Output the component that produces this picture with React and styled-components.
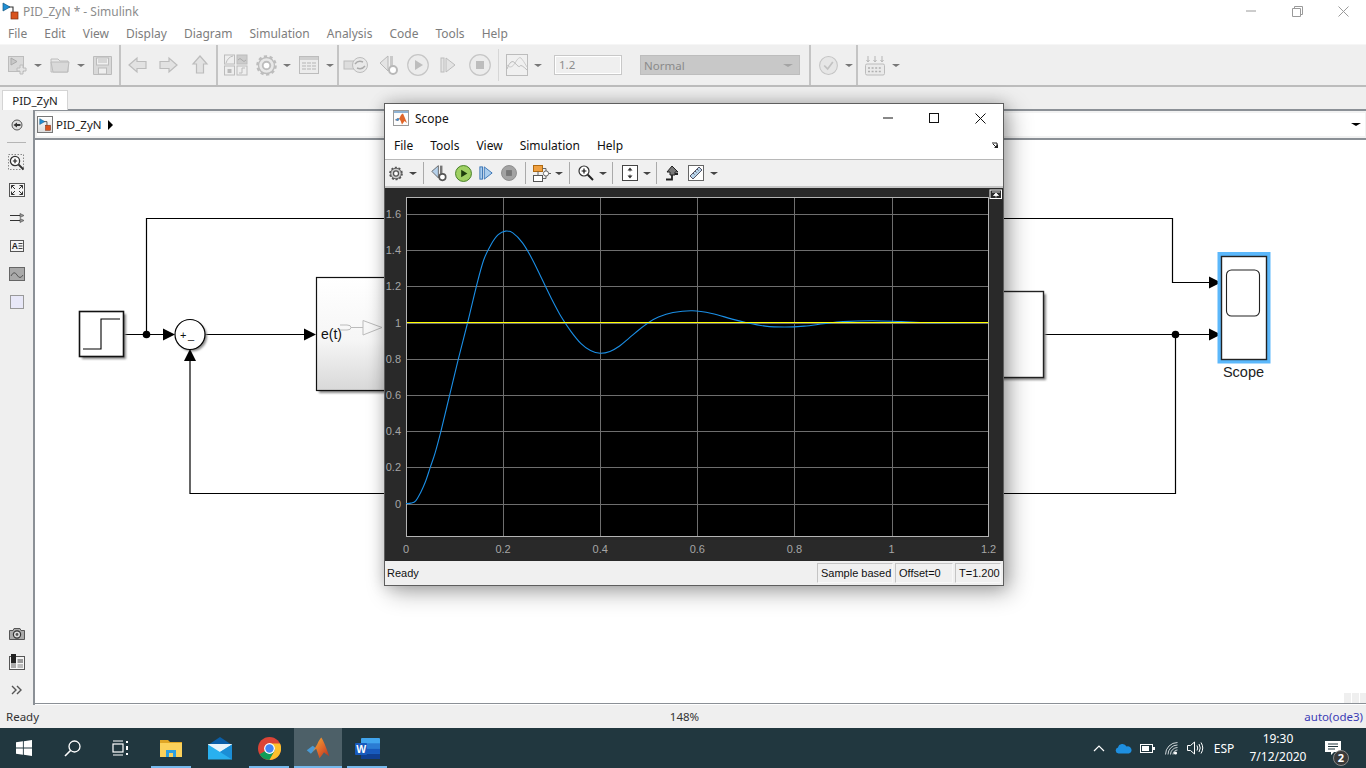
import React from 'react';
import styled, { createGlobalStyle } from 'styled-components';

const GlobalStyle = createGlobalStyle`
  html, body { margin: 0; padding: 0; background: #fff; }
  body { width: 1366px; height: 768px; overflow: hidden; font-family: "Noto Sans", "Open Sans", sans-serif; }
  * { box-sizing: border-box; }
`;

/* ---------- layout ---------- */
const Page = styled.div`
  position: relative;
  width: 1366px;
  height: 768px;
  display: flex;
  flex-direction: column;
`;
const TitleBar = styled.div`
  height: 22px;
  display: flex;
  align-items: center;
  padding-left: 2px;
  background: #fff;
`;
const TitleText = styled.span`
  margin-left: 3px;
  font-size: 12px;
  color: #8c8c8c;
`;
const WinButtons = styled.div`
  margin-left: auto;
  display: flex;
  align-items: center;
`;
const WinButton = styled.div`
  width: ${(p) => p.$w}px;
  display: flex;
  justify-content: center;
`;
const MenuBar = styled.div`
  height: ${(p) => p.$h}px;
  display: flex;
  align-items: center;
  gap: 17px;
  padding-left: ${(p) => p.$pad}px;
  background: #fff;
  position: relative;
`;
const MenuItem = styled.span`
  font-size: 12px;
  color: ${(p) => p.$color};
`;
const Toolbar = styled.div`
  height: 43px;
  display: flex;
  background: #efefef;
  border-top: 1px solid #f6f6f6;
  border-bottom: 2px solid #bcbcbc;
`;
const ToolGroup = styled.div`
  width: ${(p) => (p.$w ? `${p.$w}px` : 'auto')};
  flex: ${(p) => (p.$w ? 'none' : 1)};
  display: flex;
  align-items: center;
  padding-left: ${(p) => p.$pad || 0}px;
  border-right: 2px solid ${(p) => (p.$last ? 'transparent' : '#c4c4c4')};
`;
const Slot = styled.div`
  width: ${(p) => p.$w}px;
  margin-left: ${(p) => p.$ml || 0}px;
  flex: none;
  display: flex;
  align-items: center;
  justify-content: center;
`;
const ThinSep = styled.div`
  width: 1px;
  height: ${(p) => p.$h}px;
  margin: 0 ${(p) => p.$mr}px 0 ${(p) => p.$ml}px;
  background: ${(p) => p.$color};
  flex: none;
`;
const StopInput = styled.div`
  width: 68px;
  height: 20px;
  margin-left: 9px;
  border: 1px solid #c8c8c8;
  box-shadow: inset 0 0 0 1px #fff;
  padding-left: 4px;
  font-size: 11.5px;
  line-height: 18px;
  color: #8c8c8c;
`;
const ModeSelect = styled.div`
  width: 160px;
  height: 20px;
  margin-left: 18px;
  background: #c8c8c8;
  border: 1px solid #bdbdbd;
  padding: 0 6px 0 3px;
  display: flex;
  align-items: center;
  justify-content: space-between;
  font-size: 11.5px;
  color: #8a8a8a;
`;
const TabStrip = styled.div`
  height: 22px;
  background: #efefef;
  padding: 3px 0 0 2px;
  position: relative;
`;
const Tab = styled.div`
  width: 66px;
  height: 20px;
  background: #fff;
  border: 1px solid #d4d4d4;
  border-bottom: none;
  display: flex;
  align-items: center;
  justify-content: center;
  font-size: 11.5px;
  color: #1c1c1c;
  position: relative;
  z-index: 1;
`;
const Workspace = styled.div`
  height: 596px;
  display: flex;
`;
const Sidebar = styled.div`
  width: 35px;
  flex: none;
  background: #efefef;
  border-right: 2px solid #8b9096;
  display: flex;
  flex-direction: column;
  justify-content: space-between;
  padding: 2px 0 1px;
`;
const SideGroup = styled.div`
  display: flex;
  flex-direction: column;
  align-items: center;
`;
const SideItem = styled.div`
  width: 33px;
  height: 28px;
  display: flex;
  align-items: center;
  justify-content: center;
`;
const SideRule = styled.div`
  width: 19px;
  height: 1px;
  background: #b5b5b5;
  margin: 3px 0 5px;
`;
const Editor = styled.div`
  flex: 1;
  display: flex;
  flex-direction: column;
`;
const AddressBar = styled.div`
  height: 31px;
  border-top: 2px solid #8b9096;
  border-bottom: 2px solid #8b9096;
  background: #fff;
  box-shadow: inset 0 0 0 2px #f2f2f2;
  display: flex;
  align-items: center;
  padding: 0 6px 0 2px;
`;
const AddressIcon = styled.div`
  width: 16px;
  height: 17px;
  border: 1px solid #777;
  background: linear-gradient(#fff, #ddd);
  display: flex;
  align-items: center;
  justify-content: center;
`;
const AddressText = styled.span`
  margin-left: 3px;
  font-size: 11.5px;
  color: #1a1a1a;
`;
const Triangle = styled.span`
  width: 0;
  height: 0;
  margin-left: ${(p) => p.$ml || 0}px;
  border-top: ${(p) => p.$down ? `${p.$s * 0.75}px solid ${p.$color}` : `${p.$s}px solid transparent`};
  border-bottom: ${(p) => (p.$down ? 'none' : `${p.$s}px solid transparent`)};
  border-left: ${(p) => (p.$down ? `${p.$s}px solid transparent` : `${p.$s}px solid ${p.$color}`)};
  border-right: ${(p) => (p.$down ? `${p.$s}px solid transparent` : 'none')};
  flex: none;
`;
const Canvas = styled.div`
  height: 564px;
  background: #fff;
  border-bottom: 1px solid #8b9096;
  position: relative;
`;
const Grip = styled.div`
  position: absolute;
  right: 0;
  bottom: 0;
  display: flex;
  gap: 1px;
`;
const GripCell = styled.div`
  width: 7px;
  height: 10px;
  background: #efefef;
`;
const StatusBar = styled.div`
  height: 23px;
  background: #efefef;
  display: grid;
  grid-template-columns: 1fr 60px 1fr;
  align-items: center;
  padding: 0 3px 0 6px;
  font-size: 11.5px;
  color: #333;
`;
const StatusCell = styled.span`
  text-align: ${(p) => p.$align};
  color: ${(p) => p.$color || '#333'};
`;

/* ---------- scope window ---------- */
const ScopeWindow = styled.div`
  position: absolute;
  left: 384px;
  top: 103px;
  width: 620px;
  height: 483px;
  background: #fff;
  border: 1px solid #5e5e5e;
  box-shadow: 6px 6px 22px rgba(0, 0, 0, 0.32), 0 0 14px rgba(0, 0, 0, 0.18);
  display: flex;
  flex-direction: column;
  z-index: 5;
`;
const ScopeTitle = styled.div`
  height: 28px;
  display: flex;
  align-items: center;
  padding-left: 8px;
  font-size: 12px;
  color: #111;
`;
const ScopeName = styled.span`
  margin-left: 6px;
`;
const ScopeMenuArrow = styled.div`
  margin-left: auto;
  margin-right: 4px;
  display: flex;
`;
const ScopeTools = styled.div`
  height: 29px;
  display: flex;
  align-items: center;
  background: #f0f0f0;
  border-top: 1px solid #b8b8b8;
  border-bottom: 2px solid #c6c6c6;
`;
const ScopeStatus = styled.div`
  height: 24px;
  background: #f0f0f0;
  display: flex;
  align-items: center;
  padding: 0 2px;
  font-family: "Liberation Sans", Arial, sans-serif;
  font-size: 11px;
  color: #111;
`;
const StatusGap = styled.div`
  flex: 1;
`;
const SunkenCell = styled.div`
  width: ${(p) => p.$w}px;
  height: 20px;
  margin-left: 2px;
  border: 1px solid #c4c4c4;
  border-right-color: #f8f8f8;
  border-bottom-color: #f8f8f8;
  display: flex;
  align-items: center;
  padding-left: 3px;
  white-space: nowrap;
`;

/* ---------- taskbar ---------- */
const Taskbar = styled.div`
  height: 40px;
  background: #21373f;
  display: flex;
`;
const TaskSlot = styled.div`
  width: ${(p) => p.$w}px;
  margin-left: ${(p) => p.$ml || 0}px;
  position: relative;
  display: flex;
  align-items: center;
  justify-content: center;
  background: ${(p) => (p.$active ? '#4d6068' : 'transparent')};
  &::after {
    content: '';
    display: ${(p) => (p.$bar ? 'block' : 'none')};
    position: absolute;
    bottom: 0;
    left: ${(p) => (p.$active ? 0 : 4)}px;
    right: ${(p) => (p.$active ? 0 : 4)}px;
    height: 2px;
    background: #76b9ed;
  }
`;
const Tray = styled.div`
  margin-left: auto;
  display: flex;
  align-items: center;
  padding-right: 15px;
  color: #fff;
  font-size: 12px;
`;
const TraySlot = styled.div`
  width: ${(p) => p.$w}px;
  position: relative;
  display: flex;
  align-items: center;
  justify-content: center;
`;
const Clock = styled.div`
  line-height: 18px;
  text-align: center;
`;
const Badge = styled.span`
  position: absolute;
  left: 18px;
  top: 9px;
  width: 16px;
  height: 16px;
  border-radius: 50%;
  background: #3a3a3a;
  border: 1px solid #8a8a8a;
  font-size: 11px;
  font-weight: 700;
  line-height: 14px;
  text-align: center;
`;

/* ---------- icons ---------- */
const G1 = '#bcbcbc';
const G2 = '#d9d9d9';
const Svg = ({ w = 20, h = 20, children }) => (
  <svg width={w} height={h} viewBox={`0 0 ${w} ${h}`} style={{ display: 'block' }}>
    {children}
  </svg>
);
const Caret = ({ color = '#777' }) => <Triangle $down $s={4} $color={color} />;

const ModelMark = ({ size = 16 }) => (
  <svg width={size} height={size} viewBox="0 0 18 18" style={{ display: 'block' }}>
    <path d="M4 5H11V12" fill="none" stroke="#333" strokeWidth="1.1" />
    <path d="M1 1L1 9L8 5z" fill="#1f8fd6" stroke="#16577f" strokeWidth=".7" />
    <rect x="9" y="10" width="7" height="7" fill="#d9531e" stroke="#7a2c10" strokeWidth=".7" />
  </svg>
);
const MatlabLogo = ({ size = 16 }) => (
  <svg width={size} height={size} viewBox="0 0 32 32" style={{ display: 'block' }}>
    <defs>
      <linearGradient id="mlpeak" x1="0" y1="0" x2="1" y2="1">
        <stop offset="0" stopColor="#f2b035" />
        <stop offset=".55" stopColor="#e0662a" />
        <stop offset="1" stopColor="#b52f1e" />
      </linearGradient>
    </defs>
    <path d="M1 19L9 13L13.5 16.5L9 21L6.5 23.5z" fill="#4a9ad4" />
    <path d="M9 21L15 11Q18 4 20.5 2Q24 7 31 27Q27 24.5 24 21.5Q21 26 18 29.5Q15.5 22 13.5 16.5z" fill="url(#mlpeak)" />
  </svg>
);
const MatlabFrame = () => (
  <svg width="16" height="16" viewBox="0 0 16 16" style={{ display: 'block' }}>
    <rect x=".5" y=".5" width="15" height="15" fill="#fdfdfd" stroke="#9a9a9a" />
    <rect x="1" y="1" width="14" height="2" fill="#8fb3d4" />
    <path d="M2 10L5 8L6.5 9L5 11zM5 11L8 5Q9 3.5 10 3.5Q12 8 14 13Q12.5 12 11.5 11Q10 13 9 14.5Q8 11 6.5 9z" fill="#e0662a" />
    <path d="M2 10L5 8L6.5 9L5 11z" fill="#3f8fcf" />
  </svg>
);
const NewModelIcon = () => (
  <Svg w={20} h={20}>
    <rect x="1.5" y="1.5" width="15" height="15" fill={G2} stroke={G1} />
    <path d="M4 3L4 10L10 6.5z" fill="#c8c8c8" stroke="#aaa" />
    <path d="M13 10H16V13H19V16H16V19H13V16H10V13H13z" fill="#e4e4e4" stroke={G1} />
  </Svg>
);
const FolderIcon = () => (
  <Svg w={20} h={18}>
    <path d="M1 3H8L10 5H18V16H1z" fill="#e8e8e8" stroke={G1} />
    <path d="M1 6H19L17.5 16H3z" fill={G2} stroke={G1} />
  </Svg>
);
const SaveIcon = () => (
  <Svg w={19} h={19}>
    <path d="M.5.5H18.5V18.5H.5z" fill={G2} stroke={G1} />
    <rect x="3.5" y="2" width="12" height="7" fill="#f0f0f0" stroke={G1} />
    <path d="M5 4H14M5 6H14" stroke={G1} />
    <rect x="5.5" y="12" width="8" height="6" fill="#efefef" stroke={G1} />
  </Svg>
);
const ArrowIcon = ({ rotate = 0 }) => (
  <Svg w={20} h={20}>
    <path transform={`rotate(${rotate} 10 10)`} d="M1 10L9 3V6.5H18V13.5H9V17z" fill="#e2e2e2" stroke={G1} strokeWidth="1.2" />
  </Svg>
);
const LibraryIcon = () => (
  <Svg w={24} h={22}>
    <rect x=".5" y="1" width="10" height="9" fill="#eee" stroke={G1} />
    <path d="M2 9Q4 3 9 2" fill="none" stroke={G1} />
    <rect x="13" y="1" width="10" height="9" fill="#ccc" stroke={G1} />
    <path d="M14 6Q16 3 18 6T22 6" fill="none" stroke="#aaa" />
    <rect x=".5" y="12" width="10" height="9" fill="#eee" stroke={G1} />
    <rect x="3.5" y="15" width="4" height="4" fill="#bbb" />
    <rect x="13" y="12" width="10" height="9" fill="#eee" stroke={G1} />
    <path d="M15 19H18V14H21" fill="none" stroke={G1} />
  </Svg>
);
const GearIcon = ({ size = 20, color = '#bdbdbd', inner = '#e8e8e8' }) => (
  <svg width={size} height={size} viewBox="0 0 20 20" style={{ display: 'block' }}>
    <circle cx="10" cy="10" r="7.6" fill={inner} stroke={color} strokeWidth="1.3" />
    <circle cx="10" cy="10" r="8.6" fill="none" stroke={color} strokeWidth="2.4" strokeDasharray="3 2.4" />
    <circle cx="10" cy="10" r="3.6" fill="#fff" stroke={color} strokeWidth="1.8" />
  </svg>
);
const GridIcon = () => (
  <Svg w={20} h={18}>
    <rect x=".5" y=".5" width="19" height="17" fill="#ececec" stroke={G1} />
    <rect x="1" y="1" width="18" height="3" fill="#cfcfcf" />
    <path d="M3 7H17M3 10H17M3 13H17" stroke="#b5b5b5" strokeDasharray="4 1" />
  </Svg>
);
const LoopIcon = () => (
  <Svg w={26} h={20}>
    <rect x="1" y="6" width="10" height="8" fill="#ddd" stroke={G1} />
    <circle cx="17" cy="10" r="7.5" fill="#e8e8e8" stroke={G1} />
    <path d="M12 9Q15 5 20 7M22 11Q19 15 14 13" fill="none" stroke="#aaa" strokeWidth="1.4" />
  </Svg>
);
const StepBackIcon = ({ color = '#c9c9c9', stroke = '#b8b8b8', fill = '#e4e4e4' }) => (
  <Svg w={22} h={22}>
    <path d="M1 9L9 2V17z" fill={fill} stroke={stroke} />
    <rect x="11" y="2" width="3" height="10" fill={color} />
    <circle cx="14" cy="16" r="4" fill="#fff" stroke={stroke} strokeWidth="2" />
  </Svg>
);
const RoundBtn = ({ size = 22, ring = '#c6c6c6', bg = '#ececec', children }) => (
  <svg width={size} height={size} viewBox="0 0 22 22" style={{ display: 'block' }}>
    <circle cx="11" cy="11" r="10.3" fill={bg} stroke={ring} strokeWidth="1.2" />
    {children}
  </svg>
);
const StepFwdIcon = ({ stroke = '#bcbcbc', fill = '#e4e4e4', size = 16 }) => (
  <svg width={size} height={size} viewBox="0 0 16 16" style={{ display: 'block' }}>
    <rect x="1" y="1" width="3" height="14" fill={fill} stroke={stroke} />
    <path d="M6 1L15 8L6 15z" fill={fill} stroke={stroke} />
  </svg>
);
const ScopeIcon = () => (
  <Svg w={22} h={22}>
    <rect x=".5" y=".5" width="21" height="21" fill="#f0f0f0" stroke={G1} />
    <path d="M1 15Q5 4 9 9T14 12T21 16" fill="none" stroke={G1} />
    <path d="M1 11Q5 16 9 9T15 4T21 13" fill="none" stroke="#ccc" />
  </Svg>
);
const CheckIcon = () => (
  <RoundBtn size={19} bg="#e6e6e6" ring="#c4c4c4">
    <path d="M6 11L10 15L16 7" fill="none" stroke="#c2c2c2" strokeWidth="2" />
  </RoundBtn>
);
const KeyboardIcon = () => (
  <Svg w={20} h={21}>
    <path d="M3 1V6M10 1V6M17 1V6" stroke="#b5b5b5" />
    <path d="M1.5 5L3 7L4.5 5M8.5 5L10 7L11.5 5M15.5 5L17 7L18.5 5" fill="none" stroke="#b5b5b5" />
    <rect x=".5" y="9" width="19" height="11" rx="1.5" fill="#eaeaea" stroke={G1} />
    <path d="M3 13H17M3 16.5H17" stroke="#b0b0b0" strokeWidth="1.6" strokeDasharray="2 1.6" />
  </Svg>
);

/* sidebar icons */
const BackCircle = () => (
  <Svg w={12} h={12}>
    <circle cx="6" cy="6" r="5" fill="#e0e0e0" stroke="#555" />
    <path d="M2.5 6L6 3.5V8.5zM6 5H9.5V7H6z" fill="#333" />
  </Svg>
);
const ZoomDashIcon = () => (
  <Svg w={17} h={17}>
    <rect x=".5" y=".5" width="15" height="15" fill="none" stroke="#888" strokeDasharray="1.5 1.5" />
    <circle cx="7" cy="7" r="4.6" fill="#fff" stroke="#333" strokeWidth="1.3" />
    <path d="M4.8 7H9.2M7 4.8V9.2" stroke="#222" strokeWidth="1.2" />
    <path d="M10.5 10.5L15.5 15.5" stroke="#333" strokeWidth="1.8" />
  </Svg>
);
const FitIcon = () => (
  <Svg w={16} h={14}>
    <rect x=".5" y=".5" width="15" height="13" fill="#f4f4f4" stroke="#555" />
    <path d="M2.5 2.5H5.5M2.5 2.5V5.5M2.5 2.5L6 6M13.5 2.5H10.5M13.5 2.5V5.5M13.5 2.5L10 6M2.5 11.5H5.5M2.5 11.5V8.5M2.5 11.5L6 8M13.5 11.5H10.5M13.5 11.5V8.5M13.5 11.5L10 8" fill="none" stroke="#333" />
  </Svg>
);
const RoutesIcon = () => (
  <Svg w={16} h={10}>
    <path d="M1 2.5H12M1 7.5H12" stroke="#333" />
    <path d="M11 .5L15 2.5L11 4.5zM11 5.5L15 7.5L11 9.5z" fill="#999" stroke="#444" strokeWidth=".6" />
  </Svg>
);
const AnnotationIcon = () => (
  <Svg w={14} h={12}>
    <rect x=".5" y=".5" width="13" height="11" fill="#f4f4f4" stroke="#555" />
    <text x="1.8" y="9" fontFamily="Liberation Sans, sans-serif" fontSize="8.5" fontWeight="700" fill="#222">A</text>
    <path d="M8.5 3.5H12.5M8.5 6H12.5M8.5 8.5H12.5" stroke="#444" />
  </Svg>
);
const ImageIcon = () => (
  <Svg w={16} h={14}>
    <rect x=".5" y=".5" width="15" height="13" fill="#a9a9a9" stroke="#666" />
    <path d="M2 9Q5 3 8 8T14 8" fill="none" stroke="#555" />
  </Svg>
);
const AreaIcon = () => (
  <Svg w={14} h={14}>
    <rect x=".5" y=".5" width="13" height="13" fill="#e8e8f8" stroke="#999" />
  </Svg>
);
const CameraIcon = () => (
  <Svg w={16} h={12}>
    <path d="M.5 2.5H4L5 .5H11L12 2.5H15.5V11.5H.5z" fill="#aaa" stroke="#555" />
    <circle cx="8" cy="6.5" r="3.6" fill="#ddd" stroke="#333" strokeWidth="1.2" />
    <circle cx="8" cy="6.5" r="1.4" fill="#555" />
  </Svg>
);
const ExplorerBarIcon = () => (
  <Svg w={16} h={16}>
    <rect x=".5" y="2.5" width="15" height="13" fill="#f4f4f4" stroke="#555" />
    <rect x="2" y="0" width="5" height="9" fill="#222" />
    <rect x="2" y="9" width="5" height="5" fill="#aaa" />
    <rect x="8.5" y="5" width="5.5" height="4" fill="#999" />
    <rect x="8.5" y="10" width="5.5" height="4" fill="#bbb" />
  </Svg>
);
const DoubleChevron = () => (
  <Svg w={11} h={10}>
    <path d="M1 1L5 5L1 9M6 1L10 5L6 9" fill="none" stroke="#555" strokeWidth="1.4" />
  </Svg>
);

/* scope toolbar icons */
const LayoutIcon = () => (
  <Svg w={18} h={17}>
    <rect x=".5" y=".5" width="9" height="6" fill="#f0a040" stroke="#b06a10" />
    <rect x=".5" y="10.5" width="9" height="6" fill="#fff" stroke="#555" />
    <circle cx="13" cy="8.5" r="2.6" fill="#fff" stroke="#666" />
    <path d="M9.5 3.5H13V6M9.5 13.5H13V11M15.5 8.5H18M5 6.5V10.5" fill="none" stroke="#666" />
  </Svg>
);
const MagnifyIcon = () => (
  <Svg w={16} h={16}>
    <circle cx="6" cy="6" r="5" fill="#fff" stroke="#333" strokeWidth="1.2" />
    <path d="M3.6 6H8.4M6 3.6V8.4" stroke="#111" strokeWidth="1.2" />
    <path d="M9.8 9.8L15 15" stroke="#222" strokeWidth="2" />
  </Svg>
);
const AutoscaleIcon = () => (
  <Svg w={16} h={16}>
    <rect x=".5" y=".5" width="15" height="15" fill="#fff" stroke="#444" />
    <path d="M8 2.5L5.5 5.5H10.5zM8 13.5L5.5 10.5H10.5z" fill="#333" />
    <path d="M8 5V6.5M8 9.5V11" stroke="#555" />
  </Svg>
);
const HighlightIcon = () => (
  <Svg w={15} h={16}>
    <path d="M1 14.5H7V9H13" fill="none" stroke="#222" strokeWidth="1.8" />
    <path d="M7 1L13 7H10V10H5V7H2z" fill="#777" stroke="#222" />
  </Svg>
);
const RulerIcon = () => (
  <Svg w={16} h={16}>
    <rect x=".5" y=".5" width="15" height="15" fill="#fff" stroke="#666" />
    <path d="M2 11L11 2L14 5L5 14z" fill="#b7d3ea" stroke="#556" />
    <path d="M5 8L6.5 9.5M7 6L8.5 7.5M9 4L10.5 5.5" stroke="#556" />
  </Svg>
);

/* taskbar icons */
const WindowsIcon = () => (
  <Svg w={16} h={16}>
    <path d="M0 2.3L6.9 1.3V7.6H0zM7.8 1.2L16 0V7.6H7.8zM0 8.4H6.9V14.7L0 13.7zM7.8 8.4H16V16L7.8 14.8z" fill="#fff" />
  </Svg>
);
const SearchIcon = () => (
  <Svg w={17} h={17}>
    <circle cx="10.5" cy="6.5" r="5.5" fill="none" stroke="#fff" strokeWidth="1.3" />
    <path d="M6.5 10.5L1 16" stroke="#fff" strokeWidth="1.6" />
  </Svg>
);
const TaskViewIcon = () => (
  <Svg w={17} h={16}>
    <rect x="1" y="4" width="10" height="8" fill="none" stroke="#fff" strokeWidth="1.2" />
    <path d="M1 1H11M1 15H11" stroke="#fff" strokeWidth="1.2" />
    <path d="M15 1V3M15 6V10M15 13V15" stroke="#fff" strokeWidth="2" />
  </Svg>
);
const ExplorerIcon = () => (
  <Svg w={22} h={19}>
    <path d="M0 1H8L10 3H22V6H0z" fill="#e0a626" />
    <path d="M0 4H22V18H0z" fill="#fbd15b" />
    <path d="M6 18V11H16V18H13V14H9V18z" fill="#2d9fe0" />
  </Svg>
);
const MailIcon = () => (
  <Svg w={24} h={23}>
    <path d="M0 8L12 0L24 8V9H0z" fill="#0a5ea8" />
    <path d="M0 7.5H24V22.5H0z" fill="#29b0ef" />
    <path d="M0 7.5L12 15L24 7.5V7H0z" fill="#e8f4fb" />
    <path d="M12 15L24 7.5V22.5z" fill="#1b8ed6" />
  </Svg>
);
const ChromeIcon = () => (
  <Svg w={23} h={23}>
    <circle cx="11.5" cy="11.5" r="11.5" fill="#db4437" />
    <path d="M11.5 11.5L1.6 17.3A11.5 11.5 0 0 0 11.5 23L17.2 13z" fill="#0f9d58" />
    <path d="M11.5 6.5H22A11.5 11.5 0 0 1 11.5 23L17 13z" fill="#fbc02d" />
    <circle cx="11.5" cy="11.5" r="5.4" fill="#fff" />
    <circle cx="11.5" cy="11.5" r="4.2" fill="#4285f4" />
  </Svg>
);
const WordIcon = () => (
  <Svg w={25} h={21}>
    <rect x="6" y="0" width="19" height="21" rx="1" fill="#41a5ee" />
    <rect x="6" y="5.3" width="19" height="5.3" fill="#2b7cd3" />
    <rect x="6" y="10.6" width="19" height="5.3" fill="#185abd" />
    <rect x="6" y="15.9" width="19" height="5.1" fill="#103f91" />
    <rect x="0" y="5" width="12" height="12" rx="1" fill="#185abd" />
    <text x="1.2" y="15" fontFamily="Liberation Sans, sans-serif" fontSize="10.5" fontWeight="700" fill="#fff">W</text>
  </Svg>
);
const TrayCaret = () => (
  <Svg w={12} h={7}>
    <path d="M1 6L6 1L11 6" fill="none" stroke="#fff" strokeWidth="1.2" />
  </Svg>
);
const CloudIcon = () => (
  <Svg w={17} h={11}>
    <path d="M3.5 10.5A3 3 0 0 1 3 4.6A4.5 4.5 0 0 1 11.5 3.5A3.6 3.6 0 0 1 14 10.5z" fill="#1e8fe0" />
  </Svg>
);
const BatteryIcon = () => (
  <Svg w={15} h={9}>
    <rect x=".5" y=".5" width="12" height="8" fill="none" stroke="#fff" />
    <rect x="2" y="2" width="7" height="5" fill="#fff" />
    <rect x="13" y="3" width="2" height="3" fill="#fff" />
  </Svg>
);
const WifiIcon = () => (
  <Svg w={13} h={13}>
    <path d="M.5 12.5A12 12 0 0 1 12.5 .5M3 12.5A9.5 9.5 0 0 1 12.5 3M5.5 12.5A7 7 0 0 1 12.5 5.5M8 12.5A4.5 4.5 0 0 1 12.5 8" fill="none" stroke="#cfd6d9" />
    <circle cx="10.5" cy="11" r="1.6" fill="#fff" />
  </Svg>
);
const SoundIcon = () => (
  <Svg w={17} h={14}>
    <path d="M.5 4.5H3.5L7.5 1V13L3.5 9.5H.5z" fill="none" stroke="#fff" />
    <path d="M10 4.5Q11.5 7 10 9.5M12 3Q14.5 7 12 11M14 1.5Q17.5 7 14 12.5" fill="none" stroke="#fff" />
  </Svg>
);
const NotifyIcon = () => (
  <Svg w={16} h={14}>
    <path d="M0 0H16V11H9L6 14V11H0z" fill="#fff" />
    <path d="M3 3H13M3 5.5H13M3 8H10" stroke="#21373f" />
  </Svg>
);

/* ---------- block diagram ---------- */
const ArrowRight = ({ x, y }) => <path d={`M${x} ${y}L${x - 12} ${y - 6}V${y + 6}z`} fill="#000" />;

const BlockDiagram = () => (
  <svg width="1331" height="563" viewBox="35 140 1331 563" style={{ display: 'block' }}>
    <defs>
      <linearGradient id="pidFill" x1="0" y1="0" x2="0" y2="1">
        <stop offset="0" stopColor="#fff" />
        <stop offset=".55" stopColor="#f6f6f6" />
        <stop offset="1" stopColor="#d8d8d8" />
      </linearGradient>
      <filter id="soft" x="-20%" y="-20%" width="140%" height="140%">
        <feGaussianBlur stdDeviation="1.2" />
      </filter>
    </defs>
    <g fill="none" stroke="#000" strokeWidth="1.2">
      <path d="M123 334.5H163M146.5 334.5V218.5H390M205 334.5H304" />
      <path d="M190 361V493.5H1175.5V334.5" />
      <path d="M1000 218.5H1172.5V282.5H1209M1043 334.5H1209" />
    </g>

    <rect x="82" y="314" width="44" height="45" fill="#888" filter="url(#soft)" />
    <rect x="79.5" y="311.5" width="44" height="45" fill="#fff" stroke="#111" strokeWidth="1.6" />
    <path d="M83 349H101V319H120" fill="none" stroke="#000" strokeWidth="1.1" />

    <circle cx="146.5" cy="334.5" r="3.8" fill="#000" />
    <ArrowRight x={175} y={334.5} />
    <circle cx="192" cy="336.5" r="15" fill="#888" filter="url(#soft)" />
    <circle cx="190" cy="334.5" r="15" fill="#fff" stroke="#000" strokeWidth="1.2" />
    <text x="180" y="339" fontFamily="Liberation Sans, sans-serif" fontSize="11" fill="#111">+</text>
    <text x="188" y="339" fontFamily="Liberation Sans, sans-serif" fontSize="11" fill="#111">_</text>
    <path d="M190 349L184 361H196z" fill="#000" />
    <ArrowRight x={316} y={334.5} />

    <rect x="319" y="280" width="70" height="113" fill="#888" filter="url(#soft)" />
    <rect x="316.5" y="277.5" width="72" height="113" fill="url(#pidFill)" stroke="#111" strokeWidth="1.2" />
    <text x="321" y="339" fontFamily="Liberation Sans, sans-serif" fontSize="14" fill="#111">e(t)</text>
    <path d="M340 325H347Q351 325 351 327.5Q351 330 347 330H340" fill="none" stroke="#bbb" />
    <path d="M351 327.5H363M363 320.5L382 327.5L363 335z" fill="none" stroke="#bbb" />

    <rect x="995" y="294" width="51" height="86" fill="#888" filter="url(#soft)" />
    <rect x="995" y="291.5" width="48.5" height="86" fill="#fff" stroke="#222" strokeWidth="1.4" />

    <circle cx="1175.5" cy="334.5" r="3.8" fill="#000" />
    <ArrowRight x={1221} y={282.5} />
    <ArrowRight x={1221} y={334.5} />

    <rect x="1217.5" y="252" width="53" height="111.5" fill="#5cb8fb" />
    <rect x="1221.5" y="256.5" width="45" height="103" fill="#fff" stroke="#222" strokeWidth="1.4" />
    <rect x="1226.5" y="270" width="33" height="46" rx="5" fill="#fff" stroke="#222" strokeWidth="1.1" />
    <text x="1243.5" y="377" textAnchor="middle" fontFamily="Liberation Sans, sans-serif" fontSize="14.5" fill="#222">Scope</text>
  </svg>
);

/* ---------- scope chart ---------- */
const CURVE = [
  [0, 0], [0.01, 0.002], [0.02, 0.015], [0.03, 0.06], [0.04, 0.12], [0.05, 0.2], [0.06, 0.28], [0.072, 0.4],
  [0.09, 0.6], [0.108, 0.8], [0.127, 1], [0.145, 1.2], [0.16, 1.345], [0.175, 1.43], [0.19, 1.485], [0.205, 1.505],
  [0.22, 1.495], [0.24, 1.44], [0.26, 1.35], [0.28, 1.24], [0.3, 1.13], [0.32, 1.03], [0.34, 0.95], [0.36, 0.885],
  [0.38, 0.845], [0.4, 0.83], [0.42, 0.84], [0.44, 0.87], [0.46, 0.915], [0.48, 0.96], [0.5, 1], [0.52, 1.03],
  [0.55, 1.055], [0.59, 1.065], [0.63, 1.05], [0.67, 1.02], [0.7, 1], [0.74, 0.98], [0.78, 0.975], [0.82, 0.98],
  [0.86, 0.993], [0.9, 1.005], [0.96, 1.01], [1.02, 1.005], [1.08, 0.999], [1.2, 1],
];
const px = (t) => 406 + t * 485.5;
const py = (v) => 503.5 - v * 181;

// catmull-rom through the sampled points
const curvePath = () => {
  const pts = CURVE.map(([t, v]) => [px(t), py(v)]);
  let d = `M${pts[0][0]} ${pts[0][1]}`;
  for (let i = 0; i < pts.length - 1; i++) {
    const a = pts[Math.max(i - 1, 0)];
    const b = pts[i];
    const c = pts[i + 1];
    const e = pts[Math.min(i + 2, pts.length - 1)];
    d += `C${b[0] + (c[0] - a[0]) / 6} ${b[1] + (c[1] - a[1]) / 6} ${c[0] - (e[0] - b[0]) / 6} ${c[1] - (e[1] - b[1]) / 6} ${c[0]} ${c[1]}`;
  }
  return d;
};

const XTICKS = [0, 0.2, 0.4, 0.6, 0.8, 1, 1.2];
const YTICKS = [0, 0.2, 0.4, 0.6, 0.8, 1, 1.2, 1.4, 1.6];

const ScopeChart = () => (
  <svg width="618" height="373" viewBox="385 188 618 373" style={{ display: 'block' }}>
    <rect x="385" y="188" width="618" height="373" fill="#292929" />
    <rect x="406.5" y="197.5" width="582" height="339" fill="#000" stroke="#b4b4b4" />
    {XTICKS.slice(1, -1).map((t) => (
      <path key={t} d={`M${Math.round(px(t)) + 0.5} 198V536`} stroke="#6e6e6e" />
    ))}
    {YTICKS.map((v) => (
      <path key={v} d={`M407 ${Math.round(py(v)) + 0.5}H988`} stroke="#6e6e6e" />
    ))}
    <path d={curvePath()} fill="none" stroke="#1b8fe6" strokeWidth="1.1" />
    <path d="M407 322.5H988.5" stroke="#ffff00" strokeWidth="1.1" />
    {XTICKS.map((t) => (
      <text key={t} x={px(t)} y="553" textAnchor="middle" fontFamily="Liberation Sans, sans-serif" fontSize="11" fill="#a6a6a6">{t}</text>
    ))}
    {YTICKS.map((v) => (
      <text key={v} x="401" y={py(v) + 4} textAnchor="end" fontFamily="Liberation Sans, sans-serif" fontSize="11" fill="#a6a6a6">{v}</text>
    ))}
    <rect x="990" y="190" width="11.5" height="8.5" fill="#292929" stroke="#fff" />
    <path d="M992 192H1000M996 193L993.5 195.5H998.5zM996 195V197.5" stroke="#fff" fill="#fff" strokeWidth=".8" />
  </svg>
);

const GRAY_TEXT = '#7d7d7d';
const MENU = ['File', 'Edit', 'View', 'Display', 'Diagram', 'Simulation', 'Analysis', 'Code', 'Tools', 'Help'];
const SCOPE_MENU = ['File', 'Tools', 'View', 'Simulation', 'Help'];

export default function App() {
  return (
    <>
      <GlobalStyle />
      <Page>
        <TitleBar>
          <ModelMark size={18} />
          <TitleText>PID_ZyN * - Simulink</TitleText>
          <WinButtons>
            <WinButton $w={46}>
              <Svg w={10} h={10}><path d="M0 5H10" stroke="#9a9a9a" /></Svg>
            </WinButton>
            <WinButton $w={46}>
              <Svg w={11} h={11}><path d="M.5 2.5H8.5V10.5H.5zM2.5 2.5V.5H10.5V8.5H8.5" fill="none" stroke="#9a9a9a" /></Svg>
            </WinButton>
            <WinButton $w={46}>
              <Svg w={11} h={11}><path d="M.5 .5L10.5 10.5M10.5 .5L.5 10.5" stroke="#9a9a9a" /></Svg>
            </WinButton>
          </WinButtons>
        </TitleBar>
        <MenuBar $h={22} $pad={8}>
          {MENU.map((m) => <MenuItem key={m} $color={GRAY_TEXT}>{m}</MenuItem>)}
        </MenuBar>

        <Toolbar>
          <ToolGroup $w={121} $pad={6}>
            <Slot $w={21}><NewModelIcon /></Slot>
            <Slot $w={22}><Caret /></Slot>
            <Slot $w={22}><FolderIcon /></Slot>
            <Slot $w={20}><Caret /></Slot>
            <Slot $w={22}><SaveIcon /></Slot>
          </ToolGroup>
          <ToolGroup $w={97} $pad={2}>
            <Slot $w={30}><ArrowIcon /></Slot>
            <Slot $w={30}><ArrowIcon rotate={180} /></Slot>
            <Slot $w={30} $ml={2}><ArrowIcon rotate={90} /></Slot>
          </ToolGroup>
          <ToolGroup $w={121} $pad={4}>
            <Slot $w={28}><LibraryIcon /></Slot>
            <Slot $w={28} $ml={2}><GearIcon size={21} /></Slot>
            <Slot $w={14}><Caret /></Slot>
            <Slot $w={28} $ml={1}><GridIcon /></Slot>
            <Slot $w={14}><Caret /></Slot>
          </ToolGroup>
          <ToolGroup $w={472} $pad={3}>
            <Slot $w={28}><LoopIcon /></Slot>
            <Slot $w={28} $ml={6}><StepBackIcon /></Slot>
            <Slot $w={28}>
              <RoundBtn><path d="M8 6L16 11L8 16z" fill="#bdbdbd" /></RoundBtn>
            </Slot>
            <Slot $w={28} $ml={2}><StepFwdIcon /></Slot>
            <Slot $w={28} $ml={4}>
              <RoundBtn><rect x="7" y="7" width="8" height="8" fill="#bdbdbd" /></RoundBtn>
            </Slot>
            <ThinSep $h={32} $ml={4} $mr={4} $color="#d6d6d6" />
            <Slot $w={28}><ScopeIcon /></Slot>
            <Slot $w={14}><Caret /></Slot>
            <StopInput>1.2</StopInput>
            <ModeSelect>
              Normal
              <Triangle $down $s={5} $color="#a4a4a4" />
            </ModeSelect>
          </ToolGroup>
          <ToolGroup $w={47} $pad={3}>
            <Slot $w={28}><CheckIcon /></Slot>
            <Slot $w={14}><Caret /></Slot>
          </ToolGroup>
          <ToolGroup $pad={3} $last>
            <Slot $w={28}><KeyboardIcon /></Slot>
            <Slot $w={14}><Caret /></Slot>
          </ToolGroup>
        </Toolbar>

        <TabStrip>
          <Tab>PID_ZyN</Tab>
        </TabStrip>

        <Workspace>
          <Sidebar>
            <SideGroup>
              <SideItem><BackCircle /></SideItem>
              <SideRule />
              <SideItem><ZoomDashIcon /></SideItem>
              <SideItem><FitIcon /></SideItem>
              <SideItem><RoutesIcon /></SideItem>
              <SideItem><AnnotationIcon /></SideItem>
              <SideItem><ImageIcon /></SideItem>
              <SideItem><AreaIcon /></SideItem>
            </SideGroup>
            <SideGroup>
              <SideItem><CameraIcon /></SideItem>
              <SideItem><ExplorerBarIcon /></SideItem>
              <SideItem><DoubleChevron /></SideItem>
            </SideGroup>
          </Sidebar>
          <Editor>
            <AddressBar>
              <AddressIcon><ModelMark size={13} /></AddressIcon>
              <AddressText>PID_ZyN</AddressText>
              <Triangle $s={5} $ml={6} $color="#000" />
              <Triangle $down $s={5} $ml={1238} $color="#000" />
            </AddressBar>
            <Canvas>
              <BlockDiagram />
              <Grip>
                <GripCell />
                <GripCell />
                <GripCell />
              </Grip>
            </Canvas>
          </Editor>
        </Workspace>

        <StatusBar>
          <StatusCell $align="left">Ready</StatusCell>
          <StatusCell $align="center">148%</StatusCell>
          <StatusCell $align="right" $color="#3b3bb5">auto(ode3)</StatusCell>
        </StatusBar>

        <Taskbar>
          <TaskSlot $w={48}><WindowsIcon /></TaskSlot>
          <TaskSlot $w={48}><SearchIcon /></TaskSlot>
          <TaskSlot $w={48}><TaskViewIcon /></TaskSlot>
          <TaskSlot $w={48} $ml={3} $bar><ExplorerIcon /></TaskSlot>
          <TaskSlot $w={50}><MailIcon /></TaskSlot>
          <TaskSlot $w={48} $bar><ChromeIcon /></TaskSlot>
          <TaskSlot $w={48} $ml={1} $active $bar><MatlabLogo size={24} /></TaskSlot>
          <TaskSlot $w={48} $ml={1} $bar><WordIcon /></TaskSlot>
          <Tray>
            <TraySlot $w={24}><TrayCaret /></TraySlot>
            <TraySlot $w={24}><CloudIcon /></TraySlot>
            <TraySlot $w={24}><BatteryIcon /></TraySlot>
            <TraySlot $w={25}><WifiIcon /></TraySlot>
            <TraySlot $w={23}><SoundIcon /></TraySlot>
            <TraySlot $w={34}>ESP</TraySlot>
            <TraySlot $w={74}>
              <Clock>19:30<br />7/12/2020</Clock>
            </TraySlot>
            <TraySlot $w={36}>
              <NotifyIcon />
              <Badge>2</Badge>
            </TraySlot>
          </Tray>
        </Taskbar>

        <ScopeWindow>
          <ScopeTitle>
            <MatlabFrame />
            <ScopeName>Scope</ScopeName>
            <WinButtons>
              <WinButton $w={46}>
                <Svg w={10} h={10}><path d="M0 5H10" stroke="#111" /></Svg>
              </WinButton>
              <WinButton $w={46}>
                <Svg w={10} h={10}><rect x=".5" y=".5" width="9" height="9" fill="none" stroke="#111" /></Svg>
              </WinButton>
              <WinButton $w={46}>
                <Svg w={11} h={11}><path d="M.5 .5L10.5 10.5M10.5 .5L.5 10.5" stroke="#111" /></Svg>
              </WinButton>
            </WinButtons>
          </ScopeTitle>
          <MenuBar $h={27} $pad={9}>
            {SCOPE_MENU.map((m) => <MenuItem key={m} $color="#111">{m}</MenuItem>)}
            <ScopeMenuArrow>
              <Svg w={8} h={8}><path d="M1 1H6V6M6 6L2 2" fill="none" stroke="#222" /><path d="M3 6H7V2z" fill="#222" /></Svg>
            </ScopeMenuArrow>
          </MenuBar>
          <ScopeTools>
            <Slot $w={14} $ml={4}><GearIcon size={15} color="#555" inner="#ccc" /></Slot>
            <Slot $w={10} $ml={5}><Caret color="#444" /></Slot>
            <ThinSep $h={22} $ml={5} $mr={7} $color="#aaa" />
            <Slot $w={18}><StepBackIcon color="#777" stroke="#555" fill="#b5d0ea" /></Slot>
            <Slot $w={22} $ml={3}>
              <RoundBtn size={17} ring="#3f7a1d" bg="#9fd063"><path d="M8 6L16 11L8 16z" fill="#1d3d0c" /></RoundBtn>
            </Slot>
            <Slot $w={22} $ml={1}><StepFwdIcon stroke="#2f6db0" fill="#a9cdee" size={14} /></Slot>
            <Slot $w={22} $ml={1}>
              <RoundBtn size={16} ring="#888" bg="#a3a3a3"><rect x="7" y="7" width="8" height="8" fill="#777" /></RoundBtn>
            </Slot>
            <ThinSep $h={22} $ml={5} $mr={7} $color="#aaa" />
            <Slot $w={18}><LayoutIcon /></Slot>
            <Slot $w={10} $ml={3}><Caret color="#444" /></Slot>
            <ThinSep $h={22} $ml={5} $mr={6} $color="#aaa" />
            <Slot $w={20}><MagnifyIcon /></Slot>
            <Slot $w={10} $ml={2}><Caret color="#444" /></Slot>
            <ThinSep $h={22} $ml={4} $mr={7} $color="#aaa" />
            <Slot $w={20}><AutoscaleIcon /></Slot>
            <Slot $w={10} $ml={2}><Caret color="#444" /></Slot>
            <ThinSep $h={22} $ml={4} $mr={5} $color="#aaa" />
            <Slot $w={20}><HighlightIcon /></Slot>
            <Slot $w={20} $ml={4}><RulerIcon /></Slot>
            <Slot $w={10} $ml={3}><Caret color="#444" /></Slot>
          </ScopeTools>
          <ScopeChart />
          <ScopeStatus>
            Ready
            <StatusGap />
            <SunkenCell $w={76}>Sample based</SunkenCell>
            <SunkenCell $w={58}>Offset=0</SunkenCell>
            <SunkenCell $w={46}>T=1.200</SunkenCell>
          </ScopeStatus>
        </ScopeWindow>
      </Page>
    </>
  );
}
